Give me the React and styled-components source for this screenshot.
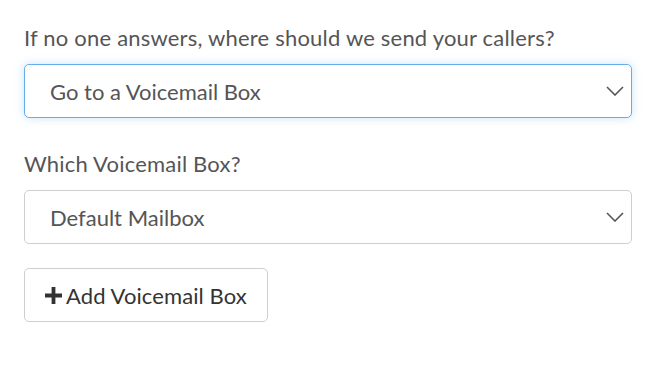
import React from 'react';
import styled, { createGlobalStyle } from 'styled-components';

const GlobalStyle = createGlobalStyle`
  body {
    margin: 0;
    background: #fff;
    font-family: Lato, "Liberation Sans", sans-serif;
  }
`;

const Page = styled.div`
  padding: 24px 22px 0 24px;
  width: 654px;
  box-sizing: border-box;
`;

const FormGroup = styled.div`
  display: flex;
  flex-direction: column;
  gap: 12px;
  margin-bottom: ${(p) => p.$spacing || 0}px;
`;

const Label = styled.label`
  font-size: 22px;
  line-height: 28px;
  letter-spacing: 0.2px;
  color: #555;
`;

const SelectWrap = styled.div`
  position: relative;
  width: 100%;
`;

const Select = styled.select`
  appearance: none;
  -webkit-appearance: none;
  width: 100%;
  height: 54px;
  box-sizing: border-box;
  padding: 0 50px 0 25px;
  font-family: Lato, "Liberation Sans", sans-serif;
  font-size: 22px;
  color: #555;
  background: #fff;
  border: 1px solid ${(p) => (p.$focused ? '#66aeeb' : '#cfcfcf')};
  border-radius: 5px;
  box-shadow: ${(p) =>
    p.$focused ? '0 0 10px rgba(102, 175, 233, 0.35)' : 'none'};
  outline: none;
`;

const Chevron = styled.svg`
  position: absolute;
  right: 8px;
  top: 50%;
  transform: translateY(-50%);
  pointer-events: none;
`;

const AddButton = styled.button`
  display: flex;
  align-items: center;
  gap: 4px;
  height: 54px;
  padding: 0 20px 0 20px;
  box-sizing: border-box;
  font-family: Lato, "Liberation Sans", sans-serif;
  font-size: 22px;
  letter-spacing: 0.1px;
  color: #333;
  background: #fff;
  border: 1px solid #cfcfcf;
  border-radius: 5px;
  cursor: pointer;
`;

const ChevronIcon = () => (
  <Chevron width="18" height="10" viewBox="0 0 18 10">
    <path d="M1 1 L9 9 L17 1" fill="none" stroke="#555" strokeWidth="1.6" />
  </Chevron>
);

const PlusIcon = () => (
  <svg width="17" height="17" viewBox="0 0 17 17">
    <path d="M6.6 0 H10.4 V6.6 H17 V10.4 H10.4 V17 H6.6 V10.4 H0 V6.6 H6.6 Z" fill="#333" />
  </svg>
);

const App = () => {
  return (
    <Page>
      <GlobalStyle />
      <FormGroup $spacing={32}>
        <Label>If no one answers, where should we send your callers?</Label>
        <SelectWrap>
          <Select $focused defaultValue="voicemail">
            <option value="voicemail">Go to a Voicemail Box</option>
            <option value="hangup">Hang up</option>
          </Select>
          <ChevronIcon />
        </SelectWrap>
      </FormGroup>
      <FormGroup $spacing={24}>
        <Label>Which Voicemail Box?</Label>
        <SelectWrap>
          <Select defaultValue="default">
            <option value="default">Default Mailbox</option>
          </Select>
          <ChevronIcon />
        </SelectWrap>
      </FormGroup>
      <AddButton type="button">
        <PlusIcon />
        Add Voicemail Box
      </AddButton>
    </Page>
  );
};

export default App;
